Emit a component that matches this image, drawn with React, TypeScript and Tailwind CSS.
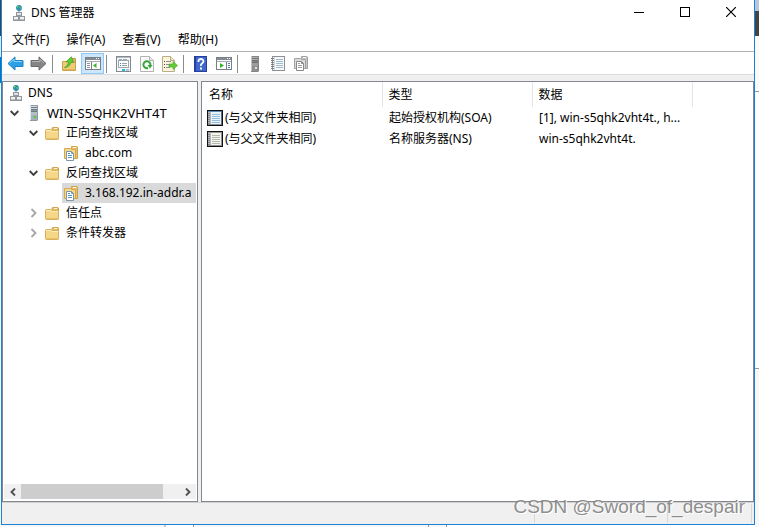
import React from 'react';

interface IconProps {
  className?: string;
}

const DnsIcon = ({ className }: IconProps) => (
  <svg className={className} width="12" height="16" viewBox="0 0 12 16" aria-hidden="true">
    <circle cx="6" cy="3" r="2.900" fill="#2b87bd" />
    <path d="M4 1h2v1H5v1H4zM6 2h2v2H7zM4 4h1v1H4z" fill="#4fca55" />
    <path d="M6 6v2M3 12v-1M9 12v-1" stroke="#8a9096" fill="none" />
    <rect x="3.500" y="7.500" width="5" height="3" fill="#dfe3e6" stroke="#92979d" />
    <rect x=".5" y="11.500" width="5" height="4" fill="#eef0f2" stroke="#92979d" />
    <rect x="6.500" y="11.500" width="5" height="4" fill="#eef0f2" stroke="#92979d" />
    <path d="M1 14.500h4M7 14.500h4" stroke="#b9bec4" />
  </svg>
);

const ServerIcon = ({ className, led }: IconProps & { led?: boolean }) => (
  <svg className={className} width="10" height="16" viewBox="0 0 10 16" aria-hidden="true">
    <path d="M1 1l1-1h7v15l-1 1H1z" fill={led ? '#8f9aa2' : '#858585'} />
    <path d="M1 1h1v14H1z" fill={led ? '#e1e9ed' : '#c4c4c4'} />
    <path d="M2 1h6v4H2z" fill={led ? '#d3dde3' : '#b3b3b3'} />
    <path d="M2 2.500h6M2 4.500h6" stroke={led ? '#6c7880' : '#707070'} />
    <path d="M2 6h6v4H2z" fill={led ? '#b4c0c8' : '#9d9d9d'} />
    <path d="M2 6.500h6" stroke={led ? '#6c7880' : '#707070'} />
    <path d="M2 10h6v5H2z" fill={led ? '#a3b0b9' : '#8e8e8e'} />
    <rect x="5" y="11" width="2" height="2" fill={led ? '#46d032' : '#e3e3e3'} />
  </svg>
);

const FolderIcon = ({ className }: IconProps) => (
  <svg className={className} width="14" height="13" viewBox="0 0 14 13" aria-hidden="true">
    <path d="M7 2.500V1.500Q7 .5 8 .5h4.500Q13.500 .5 13.500 1.500V12H7z" fill="#e3bd62" stroke="#cda24c" />
    <path d="M9 1.500h3" stroke="#fff7d5" />
    <path d="M.5 3.500Q.5 2.500 1.500 2.500H6l1 1h6.500v8q0 1-1 1h-11q-1 0-1-1z" fill="#f5d78a" stroke="#d8b05c" />
    <path d="M1.500 4V3.500H6l1 1h6" stroke="#fdefb8" fill="none" />
    <path d="M1 11.500h12" stroke="#e8c26c" />
  </svg>
);

const ZoneIcon = ({ className, muted }: IconProps & { muted?: boolean }) => (
  <svg className={className} width="14" height="15" viewBox="0 0 14 15" aria-hidden="true">
    <path d="M7.500 2.500v-2h5q1 0 1 1v11h-6z" fill={muted ? '#c4c4c4' : '#e6c06a'} stroke={muted ? '#a0a0a0' : '#cda24c'} />
    <path d="M.5 2.500h6l1 1h4v9H.5z" fill={muted ? '#dadada' : '#f5d98c'} stroke={muted ? '#a3a3a3' : '#d2a850'} />
    <path d="M9 1.500h3" stroke="#fffbe8" />
    <path d="M2.500 5.500h5l2 2v7h-7z" fill="#fff" stroke={muted ? '#898989' : '#7c96ab'} />
    <path d="M4 7.500h2M4 9.500h4M4 11.500h4" stroke={muted ? '#999' : '#5d93be'} />
    <path d="M7.500 5.500v2h2" stroke={muted ? '#898989' : '#7c96ab'} fill="none" />
  </svg>
);

const NotebookIcon = () => (
  <svg width="14" height="15" viewBox="0 0 14 15" aria-hidden="true">
    <rect x="1.500" y=".5" width="12" height="14" fill="#f7f9fa" stroke="#8d9196" />
    <path d="M5 3.500h7M5 5.500h7M5 7.500h7M5 9.500h7M5 11.500h7" stroke="#9dbbd1" />
    <path d="M3.500 1v13" stroke="#d5d8da" />
    <path d="M0 2.500h3M0 4.500h3M0 6.500h3M0 8.500h3M0 10.500h3M0 12.500h3" stroke="#808386" />
  </svg>
);

const RecordIcon = ({ muted }: { muted?: boolean }) => (
  <svg className="shrink-0" width="16" height="16" viewBox="0 0 16 16" aria-hidden="true">
    <rect x=".5" y=".5" width="15" height="15" fill={muted ? '#f4f4ee' : '#e9f3fa'} stroke="#111" />
    <path d="M14.500 1v14" stroke={muted ? '#8d8d9c' : '#5c6f91'} />
    <path d="M1 1.500h13" stroke={muted ? '#9c9c9c' : '#5d8cb8'} />
    <path d="M1 14.500h13" stroke="#8b8e92" />
    <rect x="1" y="2" width="3" height="12" fill="#b5b7b9" />
    <path d="M1 3.500h2M1 5.500h2M1 7.500h2M1 9.500h2M1 11.500h2M1 13.500h2" stroke="#85888b" />
    <path d="M5 4.500h8M5 6.500h8M5 8.500h8M5 10.500h8M5 12.500h8" stroke={muted ? '#b4b9ae' : '#94bddb'} />
  </svg>
);

const ArrowIcon = ({ forward }: { forward?: boolean }) => (
  <svg width="17" height="15" viewBox="0 0 17 15" aria-hidden="true">
    {forward ? (
      <>
        <path d="M16 7.500 9 .9v3.600H1v6h8v3.600z" fill="#858585" stroke="#6a6a6a" />
        <path d="M2 5.500h8V3.200l4 3.800" fill="none" stroke="#b4b4b4" />
      </>
    ) : (
      <>
        <path d="M1 7.500 8 .9v3.600h8v6H8v3.600z" fill="#2ba0e4" stroke="#2380c0" />
        <path d="M2.500 7.200 7 3.200v2.300h8" fill="none" stroke="#86d6fb" />
      </>
    )}
  </svg>
);

const UpFolderIcon = () => (
  <svg width="15" height="15" viewBox="0 0 15 15" aria-hidden="true">
    <path d="M8 4V2.500h5.500V13H8z" fill="#dcb662" stroke="#c49a48" />
    <path d="M.5 5.500H6l1 1h6.500v8H.5z" fill="#efcb78" stroke="#cda24c" />
    <path d="M1 13.500h12" stroke="#dfb45d" />
    <path d="M2.500 11.500C5 10.500 6 8.500 6.500 5.800H4L9.500.8l2 5.500H9C8.500 9 6 11.500 2.500 11.500z" fill="#5fce37" stroke="#399d22" strokeWidth=".7" />
  </svg>
);

const ConsoleTreeIcon = ({ play }: { play?: boolean }) => (
  <svg width="16" height="13" viewBox="0 0 16 13" aria-hidden="true">
    <rect x=".5" y=".5" width="15" height="12" fill="#fff" stroke="#7b8087" />
    <path d="M1 1h14v2H1z" fill="#858b92" />
    <path d="M11 1.500h1M13 1.500h1" stroke="#fff" />
    <path d="M1 4.500h14" stroke="#a8adb2" />
    {play ? (
      <>
        <path d="M10.500 5v8" stroke="#7b8087" />
        <path d="M4 6v5l4-2.500z" fill="#34b52b" />
        <path d="M12 6.500h2M12 8.500h2M12 10.500h2" stroke="#3d83c4" />
      </>
    ) : (
      <>
        <path d="M6.500 5v8" stroke="#7b8087" />
        <path d="M11.500 6v5l-3.500-2.500z" fill="#34b52b" />
        <path d="M2 6.500h3M2 8.500h3M2 10.500h3" stroke="#8b9299" />
      </>
    )}
  </svg>
);

const PropertiesIcon = () => (
  <svg width="15" height="16" viewBox="0 0 15 16" aria-hidden="true">
    <rect x=".5" y=".5" width="14" height="15" fill="#f6f7f8" stroke="#858a8f" />
    <path d="M1 1.500h13" stroke="#b8bcc0" />
    <rect x="2.500" y="4.500" width="10" height="7" fill="#fff" stroke="#9ba6b1" />
    <path d="M3 3.500h3M7 3.500h4" stroke="#9ba6b1" />
    <path d="M4 7.500h1M4 9.500h1" stroke="#2d7fc1" />
    <path d="M6 7.500h5M6 9.500h5" stroke="#9aa1a8" />
    <path d="M6 14h3" stroke="#25b5e8" strokeWidth="2" />
    <path d="M10 14h3" stroke="#a5c8d8" strokeWidth="2" />
  </svg>
);

const RefreshIcon = () => (
  <svg width="14" height="16" viewBox="0 0 14 16" aria-hidden="true">
    <path d="M.5.5h9l4 4v11H.5z" fill="#fbfbfb" stroke="#b3b3b3" />
    <path d="M9.500.5v4h4" fill="#e4e4e4" stroke="#b3b3b3" />
    <path d="M8 12A3.500 3.500 0 1 1 10.300 9.500" fill="none" stroke="#35a83c" strokeWidth="2" />
    <path d="M7.500 9h5L10 12.500z" fill="#35a83c" />
  </svg>
);

const ExportIcon = () => (
  <svg width="16" height="16" viewBox="0 0 16 16" aria-hidden="true">
    <path d="M.5.5h8l4 4v11H.5z" fill="#fcf5d8" stroke="#b8ac8c" />
    <path d="M8.500.5v4h4" fill="#efe4bc" stroke="#b8ac8c" />
    <path d="M2 5.500h1M2 8.500h1M2 11.500h1" stroke="#444" />
    <path d="M4 5.500h5M4 8.500h4M4 11.500h4" stroke="#8f88a8" />
    <path d="M7 8h4V5.500l4.600 4-4.600 4V11H7z" fill="#63cb37" stroke="#48a92b" strokeWidth=".6" />
  </svg>
);

const HelpIcon = () => (
  <svg width="13" height="16" viewBox="0 0 13 16" aria-hidden="true">
    <rect x=".5" y=".5" width="12" height="15" fill="#3f68cf" stroke="#263f9a" />
    <path d="M1.500 1v14" stroke="#25419f" />
    <path d="M4.500 6V4.500Q5 3 7 3t2.500 2Q9.500 6.500 8 7.500T7 10" fill="none" stroke="#fff" strokeWidth="1.800" />
    <rect x="6" y="11.500" width="2" height="2" fill="#fff" />
  </svg>
);

const ChevronIcon = ({ open }: { open?: boolean }) => (
  <svg width="9" height="10" viewBox="0 0 9 10" aria-hidden="true">
    {open ? (
      <path d="M.7 3l3.800 3.800L8.300 3" fill="none" stroke="#404040" strokeWidth="1.900" />
    ) : (
      <path d="M2.500 1l4 4-4 4" fill="none" stroke="#a6a6a6" strokeWidth="1.800" />
    )}
  </svg>
);

const menuItems = ['文件(F)', '操作(A)', '查看(V)', '帮助(H)'];

const toolGroups = [
  [
    { label: '后退', icon: <ArrowIcon /> },
    { label: '前进', icon: <ArrowIcon forward /> },
  ],
  [
    { label: '上一级', icon: <UpFolderIcon /> },
    { label: '显示/隐藏控制台树', icon: <ConsoleTreeIcon />, active: true },
  ],
  [
    { label: '属性', icon: <PropertiesIcon /> },
    { label: '刷新', icon: <RefreshIcon /> },
    { label: '导出列表', icon: <ExportIcon /> },
  ],
  [
    { label: '帮助', icon: <HelpIcon /> },
    { label: '显示/隐藏操作窗格', icon: <ConsoleTreeIcon play /> },
  ],
  [
    { label: '新建服务器', icon: <ServerIcon /> },
    { label: '新建记录', icon: <NotebookIcon /> },
    { label: '新建区域', icon: <ZoneIcon muted /> },
  ],
];

const treeItems = [
  { label: 'DNS', pad: 'pl-[5px]', icon: <DnsIcon />, iconBox: 'w-[18px]' },
  { label: 'WIN-S5QHK2VHT4T', pad: 'pl-[6px]', open: true, icon: <ServerIcon led />, iconBox: 'w-[18px]', gap: 'w-[18px]', text: 'text-[13px]' },
  { label: '正向查找区域', pad: 'pl-[25px]', open: true, icon: <FolderIcon />, iconBox: 'w-[21px]', gap: 'w-[15px]' },
  { label: 'abc.com', pad: 'pl-[59px]', icon: <ZoneIcon />, iconBox: 'w-[21px]' },
  { label: '反向查找区域', pad: 'pl-[25px]', open: true, icon: <FolderIcon />, iconBox: 'w-[21px]', gap: 'w-[15px]' },
  { label: '3.168.192.in-addr.a', pad: 'pl-[59px]', icon: <ZoneIcon />, iconBox: 'w-[21px]', selected: true },
  { label: '信任点', pad: 'pl-[25px]', open: false, icon: <FolderIcon />, iconBox: 'w-[21px]', gap: 'w-[15px]' },
  { label: '条件转发器', pad: 'pl-[25px]', open: false, icon: <FolderIcon />, iconBox: 'w-[21px]', gap: 'w-[15px]' },
];

const records = [
  { name: '(与父文件夹相同)', type: '起始授权机构(SOA)', data: '[1], win-s5qhk2vht4t., h...' },
  { name: '(与父文件夹相同)', type: '名称服务器(NS)', data: 'win-s5qhk2vht4t.', muted: true },
];

function TitleBar() {
  return (
    <header className="flex h-7 items-start justify-between">
      <div className="flex items-center pt-[5px] pl-[11px]">
        <DnsIcon />
        <h1 className="pl-[6px] leading-4">DNS 管理器</h1>
      </div>
      <div className="flex h-6">
        <button type="button" aria-label="最小化" className="flex w-[46px] items-center justify-center">
          <svg width="10" height="10" viewBox="0 0 10 10"><path d="M0 5.500h10" stroke="#000" /></svg>
        </button>
        <button type="button" aria-label="最大化" className="flex w-[46px] items-center justify-center">
          <svg width="10" height="10" viewBox="0 0 10 10"><rect x=".5" y=".5" width="9" height="9" fill="none" stroke="#000" /></svg>
        </button>
        <button type="button" aria-label="关闭" className="flex w-[46px] items-center justify-center">
          <svg width="10" height="10" viewBox="0 0 10 10"><path d="M0 0l10 10M10 0L0 10" stroke="#000" strokeWidth="1.200" /></svg>
        </button>
      </div>
    </header>
  );
}

function Toolbar() {
  return (
    <div role="toolbar" className="flex h-[23px] border-b border-[#dcdcdc] pt-px pl-[2px]">
      {toolGroups.map((group, i) => (
        <React.Fragment key={i}>
          {i > 0 && <div className="mt-[2px] mr-[5px] ml-[2px] h-[18px] w-px bg-[#8b8b8b]" />}
          {group.map((tool) => (
            <button
              key={tool.label}
              type="button"
              title={tool.label}
              className={
                'active' in tool
                  ? 'flex h-[21px] w-[23px] items-center justify-center border border-[#90c8f6] bg-[#cce6fb]'
                  : 'flex h-[21px] w-[23px] items-center justify-center'
              }
            >
              {tool.icon}
            </button>
          ))}
        </React.Fragment>
      ))}
    </div>
  );
}

function TreePane() {
  return (
    <aside className="flex w-[196px] shrink-0 flex-col border border-[#828790] p-px">
      <ul className="flex-1">
        {treeItems.map((item) => (
          <li key={item.label} className={`flex h-5 items-center whitespace-nowrap ${item.pad}`}>
            {item.gap && (
              <button type="button" aria-label={item.label} aria-expanded={item.open} className={`shrink-0 ${item.gap}`}>
                <ChevronIcon open={item.open} />
              </button>
            )}
            <span
              className={
                item.selected
                  ? '-ml-px flex h-5 flex-1 items-center bg-[#d9d9d9] pl-[2px]'
                  : 'flex h-5 items-center pl-px'
              }
            >
              <span className={`shrink-0 ${item.iconBox}`}>{item.icon}</span>
              <span className={item.text}>{item.label}</span>
            </span>
          </li>
        ))}
      </ul>
      <div className="mb-px flex h-[15px] bg-[#f0f0f0]">
        <button type="button" aria-label="向左滚动" className="flex w-[17px] items-center justify-center">
          <svg width="6" height="8" viewBox="0 0 6 8"><path d="M5 .5L1.500 4 5 7.500" fill="none" stroke="#505050" strokeWidth="1.900" /></svg>
        </button>
        <div className="flex-1">
          <div className="h-full w-[90%] bg-[#cdcdcd]" />
        </div>
        <button type="button" aria-label="向右滚动" className="flex w-[17px] items-center justify-center">
          <svg width="6" height="8" viewBox="0 0 6 8"><path d="M1 .5L4.500 4 1 7.500" fill="none" stroke="#505050" strokeWidth="1.900" /></svg>
        </button>
      </div>
    </aside>
  );
}

function RecordList() {
  return (
    <main className="min-w-0 flex-1 border border-[#828790] bg-white">
      <table className="w-full table-fixed border-collapse text-left">
        <colgroup>
          <col className="w-[180px]" />
          <col className="w-[150px]" />
          <col className="w-[160px]" />
          <col />
        </colgroup>
        <thead>
          <tr className="h-[25px]">
            <th className="border-r border-[#e5e5e5] pl-[7px] font-normal">名称</th>
            <th className="border-r border-[#e5e5e5] pl-[6px] font-normal">类型</th>
            <th className="border-r border-[#e5e5e5] pl-[6px] font-normal">数据</th>
            <td />
          </tr>
        </thead>
        <tbody>
          {records.map((record) => (
            <tr key={record.type} className="h-[21px]">
              <td className="pl-[5px]">
                <div className="flex items-center gap-[2px]">
                  <RecordIcon muted={record.muted} />
                  {record.name}
                </div>
              </td>
              <td className="pl-[7px]">{record.type}</td>
              <td className="pl-[7px] whitespace-nowrap">{record.data}</td>
              <td />
            </tr>
          ))}
        </tbody>
      </table>
    </main>
  );
}

export default function App() {
  return (
    <div className="relative flex h-screen overflow-hidden bg-[#f8f7f6] font-['Noto_Sans','Noto_Sans_CJK_SC',sans-serif] text-[12px] leading-4 text-black">
      {/* Slice of the desktop left of the window */}
      <div className="flex w-px shrink-0 flex-col">
        <div className="h-9 bg-[#444]" />
        <div className="h-[21px] bg-[#e8e8e8]" />
        <div className="h-[26px] bg-[#0078c8]" />
      </div>

      <div className="flex min-w-0 flex-1 flex-col">
        <div className="flex min-h-0 flex-1 flex-col border border-t-0 border-[#1883d7] bg-white">
          <TitleBar />
          <nav className="flex h-6 items-center gap-[17px] border-b border-[#b0b3b8] pl-[10px]">
            {menuItems.map((item) => (
              <button key={item} type="button">{item}</button>
            ))}
          </nav>
          <Toolbar />
          <div className="flex min-h-0 flex-1 gap-[3px] bg-[#f0f0f0] pt-[6px]">
            <div className="flex bg-white">
              <TreePane />
            </div>
            <RecordList />
          </div>
          <footer className="flex h-[22px] justify-end border-t border-[#d0d0d0] bg-[#f0f0f0] pt-px pr-[2px] pb-px">
            <div className="w-[133px] border-l border-[#d8d8d8]" />
            <div className="w-[85px] border-x border-[#d8d8d8]" />
          </footer>
        </div>
        <div className="flex h-[2px] shrink-0">
          <div className="w-[165px] border-r-2 border-[#c8c8c8]" />
          <div className="w-7 border-r border-[#999] bg-white" />
          <div className="w-[235px] border-r border-[#999]" />
          <div className="w-[18px] border-r border-[#999]" />
          <div className="flex-1 bg-white" />
        </div>
      </div>

      <div className="flex w-1 shrink-0 flex-col">
        <div className="h-[11px] bg-[#b9c6d9]" />
        <div className="h-[25px] bg-[#444]" />
        <div className="h-14 border-b border-[#999] bg-[#fafafa]" />
        <div className="h-[277px] border-b border-[#999] bg-white" />
        <div className="flex-1 bg-[#f8f7f6]" />
      </div>

      <p className="absolute right-[14px] bottom-2 font-['Liberation_Sans',sans-serif] text-[19px] leading-6 text-[#808080]/90 [text-shadow:1px_1px_0_#ffffff]">
        CSDN @Sword_of_despair
      </p>
    </div>
  );
}
